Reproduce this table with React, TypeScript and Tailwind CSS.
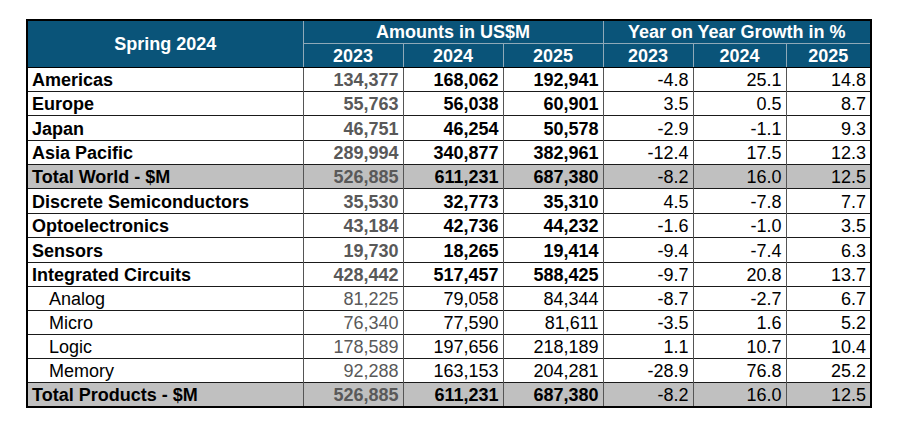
type Row = {
  label: string;
  amounts: string[];
  growth: string[];
  kind?: "bold" | "total" | "sub";
  tall?: boolean;
};

const rows: Row[] = [
  { label: "Americas", amounts: ["134,377", "168,062", "192,941"], growth: ["-4.8", "25.1", "14.8"], kind: "bold" },
  { label: "Europe", amounts: ["55,763", "56,038", "60,901"], growth: ["3.5", "0.5", "8.7"], kind: "bold" },
  { label: "Japan", amounts: ["46,751", "46,254", "50,578"], growth: ["-2.9", "-1.1", "9.3"], kind: "bold", tall: true },
  { label: "Asia Pacific", amounts: ["289,994", "340,877", "382,961"], growth: ["-12.4", "17.5", "12.3"], kind: "bold" },
  { label: "Total World - $M", amounts: ["526,885", "611,231", "687,380"], growth: ["-8.2", "16.0", "12.5"], kind: "total" },
  { label: "Discrete Semiconductors", amounts: ["35,530", "32,773", "35,310"], growth: ["4.5", "-7.8", "7.7"], kind: "bold", tall: true },
  { label: "Optoelectronics", amounts: ["43,184", "42,736", "44,232"], growth: ["-1.6", "-1.0", "3.5"], kind: "bold" },
  { label: "Sensors", amounts: ["19,730", "18,265", "19,414"], growth: ["-9.4", "-7.4", "6.3"], kind: "bold", tall: true },
  { label: "Integrated Circuits", amounts: ["428,442", "517,457", "588,425"], growth: ["-9.7", "20.8", "13.7"], kind: "bold" },
  { label: "Analog", amounts: ["81,225", "79,058", "84,344"], growth: ["-8.7", "-2.7", "6.7"], kind: "sub" },
  { label: "Micro", amounts: ["76,340", "77,590", "81,611"], growth: ["-3.5", "1.6", "5.2"], kind: "sub" },
  { label: "Logic", amounts: ["178,589", "197,656", "218,189"], growth: ["1.1", "10.7", "10.4"], kind: "sub" },
  { label: "Memory", amounts: ["92,288", "163,153", "204,281"], growth: ["-28.9", "76.8", "25.2"], kind: "sub" },
  { label: "Total Products - $M", amounts: ["526,885", "611,231", "687,380"], growth: ["-8.2", "16.0", "12.5"], kind: "total" },
];

const years = ["2023", "2024", "2025"];

export default function App() {
  return (
    <div className="h-[426px] w-[900px] bg-white pl-[26px] pt-[19px] font-['Liberation_Sans',Arial,sans-serif] text-[18px] leading-[22px] text-black">
      <table className="w-[846px] table-fixed border-collapse border-2 border-black">
        <colgroup>
          <col className="w-[276px]" />
          <col className="w-[100px]" />
          <col className="w-[100px]" />
          <col className="w-[100px]" />
          <col className="w-[90px]" />
          <col className="w-[93px]" />
          <col className="w-[85px]" />
        </colgroup>
        <thead className="bg-[#0a5479] font-bold text-white">
          <tr className="h-[23px]">
            <th rowSpan={2} className="border border-black border-r-[#8fa9b8] text-center">
              Spring 2024
            </th>
            <th colSpan={3} className="border-b border-r border-b-[#8fa9b8] border-r-[#8fa9b8] text-center">
              Amounts in US$M
            </th>
            <th colSpan={3} className="border-b border-b-[#8fa9b8] text-center">
              Year on Year Growth in %
            </th>
          </tr>
          <tr className="h-[24px]">
            {[...years, ...years].map((y, i) => (
              <th
                key={i}
                className="border-r border-b border-r-[#8fa9b8] border-b-black text-center last:border-r-black"
              >
                {y}
              </th>
            ))}
          </tr>
        </thead>
        <tbody>
          {rows.map((r) => {
            const bold = r.kind !== "sub";
            return (
              <tr
                key={r.label}
                className={`border-b border-[#1a1a1a] ${r.tall ? "leading-[22px]" : "leading-[21px]"} ${
                  r.kind === "total" ? "bg-[#c0c0c0]" : "bg-white"
                }`}
              >
                <td
                  className={`border-r border-r-[#555] pt-[2px] align-bottom whitespace-nowrap ${
                    bold ? "pl-[4px] font-bold" : "pl-[21px]"
                  }`}
                >
                  {r.label}
                </td>
                {r.amounts.map((a, i) => (
                  <td
                    key={i}
                    className={`border-r border-r-[#555] pt-[2px] pr-[4px] text-right align-bottom ${
                      bold ? "font-bold" : ""
                    } ${i === 0 ? "text-[#595959]" : "text-black"}`}
                  >
                    {a}
                  </td>
                ))}
                {r.growth.map((g, i) => (
                  <td
                    key={i}
                    className="border-r border-r-[#555] pt-[2px] pr-[4px] text-right align-bottom last:border-r-black"
                  >
                    {g}
                  </td>
                ))}
              </tr>
            );
          })}
        </tbody>
      </table>
    </div>
  );
}
